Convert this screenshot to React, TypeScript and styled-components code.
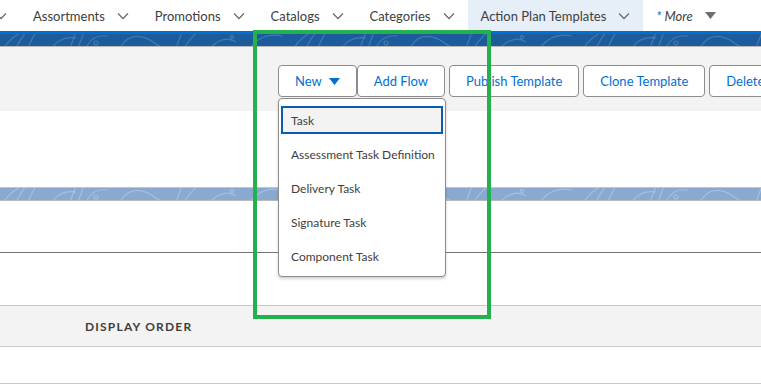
import React from 'react';
import styled, { createGlobalStyle } from 'styled-components';

const GlobalStyle = createGlobalStyle`
  body {
    margin: 0;
    font-family: Lato, 'Liberation Sans', sans-serif;
    background: #fff;
  }
`;

const Page = styled.div`
  position: relative;
  width: 761px;
  height: 392px;
  overflow: hidden;
  background: #fff;
`;

const NavBar = styled.nav`
  display: flex;
  height: 31px;
  background: #fff;
  white-space: nowrap;
`;

const NavTab = styled.div<{ $active?: boolean; $edge?: boolean }>`
  display: flex;
  align-items: center;
  gap: 12px;
  padding: 0 13px;
  margin-left: ${({ $edge }) => ($edge ? '-18px' : '0')};
  background: ${({ $active }) => ($active ? '#e6eef8' : 'transparent')};
  color: #3e3e3c;
  font-size: 13px;
`;

const MoreLabel = styled.span`
  font-style: italic;
  color: #3e3e3c;

  b {
    color: #0070d2;
    font-weight: normal;
    margin-right: 3px;
  }
`;

const BrandLine = styled.div`
  height: 3px;
  background: #0070d2;
`;

const Band = styled.div<{ $tone: 'dark' | 'light' }>`
  position: relative;
  height: 12px;
  overflow: hidden;
  background: ${({ $tone }) => ($tone === 'dark' ? '#1c5c9d' : '#8aa9d1')};
  border-top: ${({ $tone }) => ($tone === 'light' ? '1px solid #c4c4c4' : 'none')};
  border-bottom: 1px solid #b9b9b9;

  svg {
    display: block;
  }
`;

const Toolbar = styled.div`
  display: flex;
  gap: 4px;
  height: 64px;
  box-sizing: border-box;
  padding: 18px 0 0 278px;
  background: #f3f3f3;
  white-space: nowrap;
`;

const ButtonGroup = styled.div`
  position: relative;
  display: flex;
`;

const Button = styled.button`
  display: flex;
  align-items: center;
  gap: 7px;
  height: 32px;
  padding: 0 16px;
  border: 1px solid #8c8c8c;
  border-radius: 4px;
  background: #fff;
  color: #0070d2;
  font-family: Lato, 'Liberation Sans', sans-serif;
  font-size: 13px;
  flex-shrink: 0;
`;

const Menu = styled.ul`
  position: absolute;
  top: 33px;
  left: 0;
  display: flex;
  flex-direction: column;
  width: 168px;
  box-sizing: border-box;
  margin: 0;
  padding: 4px 0 3px;
  list-style: none;
  background: #fff;
  border: 1px solid #8c8c8c;
  border-radius: 4px;
  box-shadow: 0 2px 3px rgba(0, 0, 0, 0.18);
  z-index: 2;
`;

const MenuItem = styled.li<{ $focused?: boolean }>`
  display: flex;
  align-items: center;
  height: 28px;
  margin: 3px 2px;
  padding-left: ${({ $focused }) => ($focused ? '8px' : '10px')};
  box-sizing: border-box;
  border: ${({ $focused }) => ($focused ? '2px solid #0b5cab' : 'none')};
  background: ${({ $focused }) => ($focused ? '#f3f3f3' : 'transparent')};
  color: #3e3e3c;
  font-size: 12px;
`;

const Blank = styled.div<{ $height: number; $line?: string }>`
  height: ${({ $height }) => $height}px;
  border-bottom: ${({ $line }) => ($line ? `1px solid ${$line}` : 'none')};
`;

const HeaderRow = styled.div`
  display: flex;
  align-items: center;
  height: 40px;
  padding-left: 85px;
  background: #f3f3f3;
  border-bottom: 1px solid #c9c9c9;
`;

const HeaderCell = styled.span`
  color: #3e3e3c;
  font-size: 12px;
  font-weight: 700;
  letter-spacing: 1.2px;
  text-transform: uppercase;
`;

const Highlight = styled.div`
  position: absolute;
  left: 253px;
  top: 30px;
  width: 238px;
  height: 289px;
  box-sizing: border-box;
  border: 4px solid #22b14c;
  pointer-events: none;
  z-index: 3;
`;

const Chevron = () => (
  <svg width="12" height="8" viewBox="0 0 12 8">
    <polyline points="1,1.5 6,6.5 11,1.5" fill="none" stroke="#706e6b" strokeWidth="1.3" />
  </svg>
);

const Caret = ({ color }: { color: string }) => (
  <svg width="11" height="7" viewBox="0 0 11 7">
    <polygon points="0,0 11,0 5.5,7" fill={color} />
  </svg>
);

// loose hand-drawn looking swirl pattern for the brand bands
const swirlPaths = [
  'M4 14 Q10 4 22 -2',
  'M16 14 Q20 6 26 -2',
  'M28 14 Q31 6 36 -2',
  'M52 14 Q60 2 76 4',
  'M70 14 L76 -2',
  'M78 14 L84 -2',
  'M86 14 Q92 0 108 2',
  'M120 14 Q130 -4 150 6 Q158 12 164 14',
  'M176 14 L182 -2',
  'M184 14 Q190 4 198 -2',
  'M210 14 Q224 0 236 8',
  'M250 14 Q262 -2 282 2',
];

const Swirls = ({ stroke }: { stroke: string }) => (
  <svg width="761" height="12" viewBox="0 0 761 12">
    <g fill="none" stroke={stroke} strokeWidth="1.2">
      {[0, 290, 580].map(offset => (
        <g key={offset} transform={`translate(${offset} 0)`}>
          {swirlPaths.map(d => (
            <path key={d} d={d} />
          ))}
          <circle cx="96" cy="9" r="2" />
          <circle cx="232" cy="3" r="1.6" />
        </g>
      ))}
    </g>
  </svg>
);

const tabs = ['Assortments', 'Promotions', 'Catalogs', 'Categories'];
const menuItems = ['Task', 'Assessment Task Definition', 'Delivery Task', 'Signature Task', 'Component Task'];

const App: React.FC = () => {
  return (
    <Page>
      <GlobalStyle />
      <NavBar>
        <NavTab $edge>
          <Chevron />
        </NavTab>
        {tabs.map(tab => (
          <NavTab key={tab}>
            {tab}
            <Chevron />
          </NavTab>
        ))}
        <NavTab $active>
          Action Plan Templates
          <Chevron />
        </NavTab>
        <NavTab>
          <MoreLabel>
            <b>*</b>More
          </MoreLabel>
          <Caret color="#706e6b" />
        </NavTab>
      </NavBar>
      <BrandLine />
      <Band $tone="dark">
        <Swirls stroke="rgba(255,255,255,0.18)" />
      </Band>

      <Toolbar>
        <ButtonGroup>
          <Button>
            New
            <Caret color="#0070d2" />
          </Button>
          <Button>Add Flow</Button>
          <Menu>
            {menuItems.map((item, i) => (
              <MenuItem key={item} $focused={i === 0}>
                {item}
              </MenuItem>
            ))}
          </Menu>
        </ButtonGroup>
        <Button>Publish Template</Button>
        <Button>Clone Template</Button>
        <Button>Delete</Button>
      </Toolbar>

      <Blank $height={76} />
      <Band $tone="light">
        <Swirls stroke="rgba(255,255,255,0.25)" />
      </Band>
      <Blank $height={51} $line="#747474" />
      <Blank $height={52} $line="#c9c9c9" />
      <HeaderRow>
        <HeaderCell>Display Order</HeaderCell>
      </HeaderRow>
      <Blank $height={36} $line="#c9c9c9" />

      <Highlight />
    </Page>
  );
};

export default App;
